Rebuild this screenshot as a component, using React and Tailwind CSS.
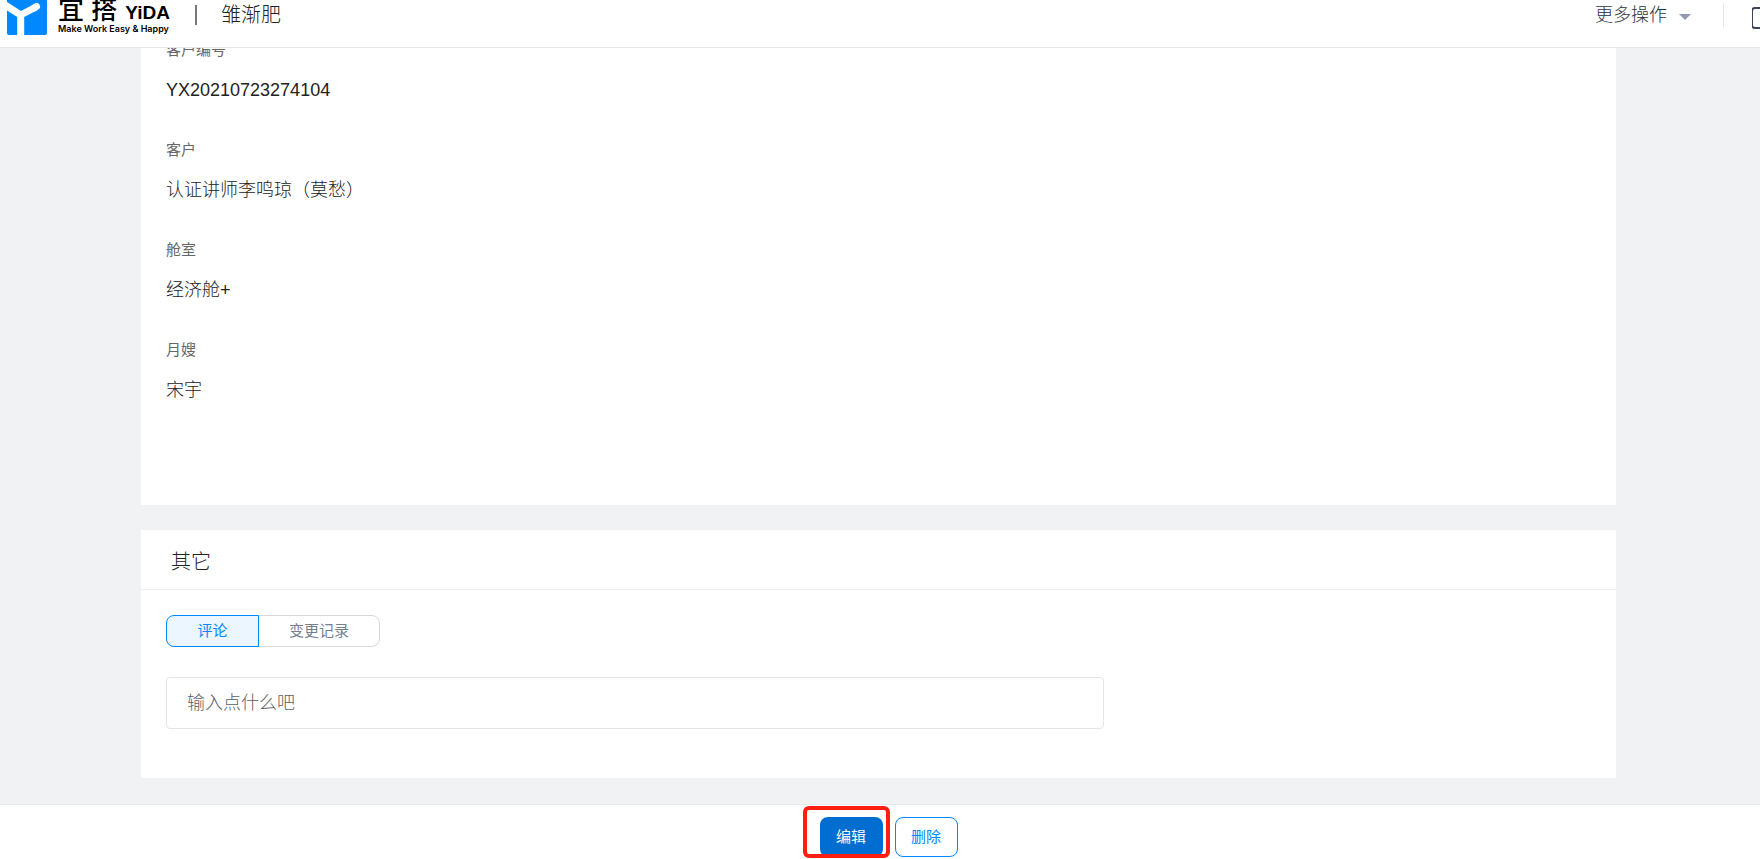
import { useState } from "react";

const fields = [
    { label: "客户编号", value: "YX20210723274104" },
    { label: "客户", value: "认证讲师李鸣琼（莫愁）" },
    { label: "舱室", value: "经济舱+" },
    { label: "月嫂", value: "宋宇" },
];

function Logo() {
    return (
        <a href="#" className="flex items-center gap-[11px] text-black">
            <svg viewBox="0 0 40 40" className="h-10 w-10" aria-hidden="true">
                <rect width="40" height="40" rx="2" fill="#0089ff" />
                <path d="M-2 10 L13.7 20 L29 12 M13.7 19 V42" fill="none" stroke="#fff" strokeWidth="7" strokeLinejoin="round" />
                <path d="M27 13 L29.5 11.5" stroke="#fff" strokeWidth="7" strokeLinecap="round" />
            </svg>
            <span className="flex flex-col pt-1">
                <span className="flex items-baseline gap-2 leading-5 font-bold">
                    <span className="text-[26px] font-medium">宜 搭</span>
                    <span className="text-[19px]">YiDA</span>
                </span>
                <span className="font-[Inter] text-[9px] leading-3 font-semibold">Make Work Easy &amp; Happy</span>
            </span>
        </a>
    );
}

function Header() {
    return (
        <header className="relative z-10 h-12 shrink-0 overflow-hidden border-b border-[#e6e7e9] bg-white">
            {/* แถบหัวเลื่อนขึ้นไปบางส่วน */}
            <div className="-mt-5 flex h-[70px] items-center justify-between pl-[7px]">
                <div className="flex items-center">
                    <Logo />
                    <span className="ml-[25px] h-5 w-[2px] bg-[#777]" />
                    <h1 className="ml-6 text-[20px] font-light text-[#222]">雏渐肥</h1>
                </div>
                <div className="flex items-center">
                    <button className="flex items-center gap-3 text-[18px] font-light text-[#2c3340]">
                        更多操作
                        <svg viewBox="0 0 12 6" className="mt-1 h-[6px] w-3" aria-hidden="true">
                            <path d="M0 0h12L6 6z" fill="#8f9bb0" />
                        </svg>
                    </button>
                    <span className="ml-8 h-6 w-px bg-[#e3e5e8]" />
                    <button aria-label="more" className="ml-7 h-8 w-2 overflow-hidden pt-2">
                        <svg viewBox="0 0 8 24" className="h-6 w-2" aria-hidden="true">
                            <rect x="0" y="1" width="20" height="20" rx="3" fill="none" stroke="#3c4656" strokeWidth="2" />
                        </svg>
                    </button>
                </div>
            </div>
        </header>
    );
}

function OtherCard() {
    const [tab, setTab] = useState("comment");
    const base = "h-8 border text-[15px]";
    const on = "z-10 border-[#0089ff] bg-[#ebf6ff] text-[#0089ff]";
    const off = "border-[#d4d9e0] text-[#747f8f]";

    return (
        <section className="mt-[25px] bg-white pb-[49px]">
            <h2 className="flex h-[60px] items-center border-b border-[#eceef0] pt-1 pl-[30px] text-[20px] font-light text-[#222]">其它</h2>
            <div className="px-[25px] pt-[25px]">
                <div className="flex">
                    <button
                        onClick={() => setTab("comment")}
                        className={`${base} w-[93px] rounded-l-lg ${tab === "comment" ? on : off}`}
                    >
                        评论
                    </button>
                    <button
                        onClick={() => setTab("log")}
                        className={`${base} -ml-px w-[122px] rounded-r-lg ${tab === "log" ? on : off}`}
                    >
                        变更记录
                    </button>
                </div>
                <div className="mt-[30px] w-2/3 pr-3">
                    <input
                        type="text"
                        aria-label="评论"
                        placeholder="输入点什么吧"
                        className="h-[52px] w-full rounded border border-[#e4e5e7] px-5 text-[18px] font-light placeholder:text-[#606060]"
                    />
                </div>
            </div>
        </section>
    );
}

export default function App() {
    return (
        <div className="flex h-screen flex-col overflow-hidden bg-[#f1f2f4] font-['Liberation_Sans','Noto_Sans_CJK_SC',sans-serif]">
            <Header />

            <main className="min-h-0 flex-1 pr-36 pl-[141px]">
                <section className="-mt-3 bg-white px-[25px] pb-[69px]">
                    <dl>
                        {fields.map((f) => (
                            <div key={f.label} className="h-[100px]">
                                <dt className="h-7 text-[15px] leading-7 text-[#666]">{f.label}</dt>
                                <dd className="mt-3 text-[18px] leading-7 font-light text-[#222]">{f.value}</dd>
                            </div>
                        ))}
                    </dl>
                </section>
                <OtherCard />
            </main>

            <footer className="flex shrink-0 justify-center border-t border-[#e6e8ea] bg-white pb-[2px]">
                <div className="flex gap-3 pt-3 pl-[17px]">
                    <div className="relative">
                        <button className="h-10 w-[63px] rounded-lg bg-[#006dd0] text-[15px] text-white">编辑</button>
                        <span className="pointer-events-none absolute -top-[11px] -left-[17px] h-[52px] w-[87px] rounded-md border-4 border-[#ff1e12]" />
                    </div>
                    <button className="h-10 w-[63px] rounded-lg border border-[#0089ff] bg-white text-[15px] text-[#0089ff]">删除</button>
                </div>
            </footer>
        </div>
    );
}
